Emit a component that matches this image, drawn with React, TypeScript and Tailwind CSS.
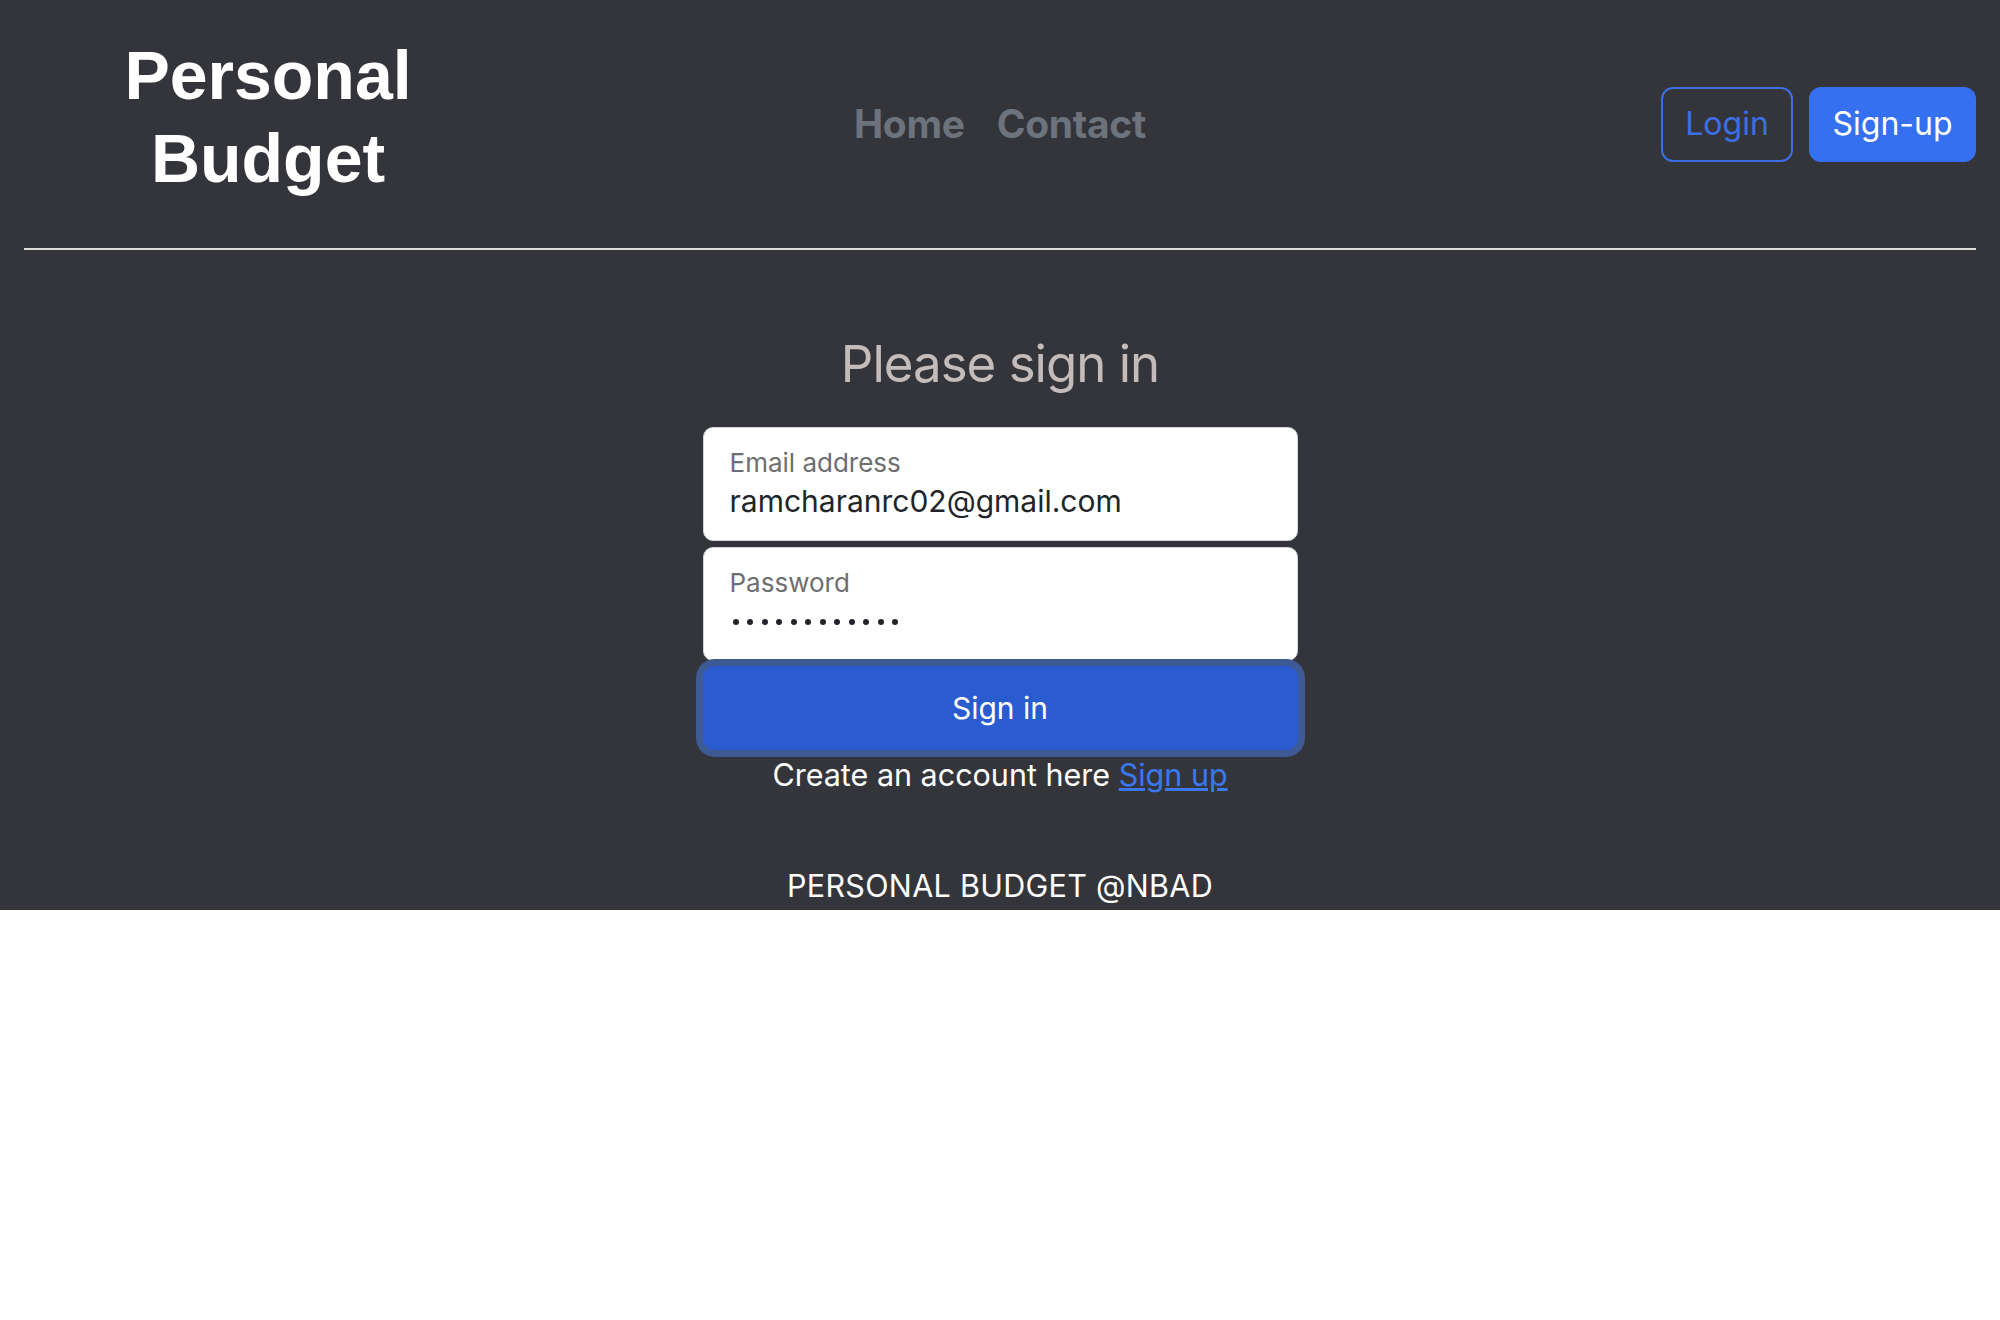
import React from "react"

const sans = "font-['Inter','Noto_Sans',sans-serif]"

function Header() {
  return (
    <header className="px-6 pt-[34px]">
      <div className="grid grid-cols-[488px_1fr_488px] items-center h-[180px]">
        <div className="self-start text-center font-['Liberation_Sans',Arial,sans-serif] font-bold text-white text-[68px] leading-[83px]">
          <div>Personal</div>
          <div>Budget</div>
        </div>
        <nav className="flex justify-center gap-[32px] text-[39px] tracking-[-0.3px] font-bold text-[#6c737c]">
          <a href="#">Home</a>
          <a href="#">Contact</a>
        </nav>
        <div className="flex justify-end gap-4">
          <button className="w-[132px] h-[75px] rounded-[12px] border-2 border-[#3b6fe6] text-[#3b6fe6] text-[32px]">
            Login
          </button>
          <button className="w-[167px] h-[75px] rounded-[12px] bg-[#3470f0] text-white text-[32px]">
            Sign-up
          </button>
        </div>
      </div>
      <div className="h-[2px] bg-[#dcdcdc] mt-[34px]" />
    </header>
  )
}

function Field({ label, children }: { label: string; children: React.ReactNode }) {
  return (
    <div className="h-[114px] rounded-[10px] border border-[#ced4da] bg-white px-[26px] pt-[19px]">
      <div className="text-[26px] leading-[32px] text-[#6c6e71]">{label}</div>
      <div className="mt-[4px] h-[36px] text-[30px] leading-[36px] text-[#212529]">{children}</div>
    </div>
  )
}

function SignInForm() {
  const dots = Array.from({ length: 12 })
  return (
    <main className="flex flex-col items-center">
      <h1 className="mt-[83px] text-[51px] leading-[61px] tracking-[-1px] text-[#c4bbbb]">Please sign in</h1>
      <form className="w-[595px] mt-[33px]" onSubmit={(e) => e.preventDefault()}>
        <Field label="Email address">ramcharanrc02@gmail.com</Field>
        <div className="mt-[6px]">
          <Field label="Password">
            <div className="flex items-center gap-[8.5px] h-full pl-[3px] pt-[2px]" aria-label="password">
              {dots.map((_, i) => (
                <span key={i} className="w-[6px] h-[6px] rounded-full bg-[#212529]" />
              ))}
            </div>
          </Field>
        </div>
        <button
          type="submit"
          className="mt-[5px] w-full h-[84px] rounded-[12px] bg-[#2a5bcf] text-white text-[30px] shadow-[0_0_0_7px_#3d5a95]"
        >
          Sign in
        </button>
      </form>
      <p className="mt-[7px] text-[30.5px] leading-[36px] text-white">
        Create an account here{" "}
        <a href="#" className="text-[#3a78f0] underline">Sign up</a>
      </p>
      <footer className="mt-[75px] pb-[6px] text-[30.5px] leading-[36px] tracking-[0.3px] text-white">
        PERSONAL BUDGET @NBAD
      </footer>
    </main>
  )
}

export default function App() {
  return (
    <div className={`${sans} bg-white min-h-screen`}>
      <div className="bg-[#34353a]">
        <Header />
        <SignInForm />
      </div>
    </div>
  )
}
